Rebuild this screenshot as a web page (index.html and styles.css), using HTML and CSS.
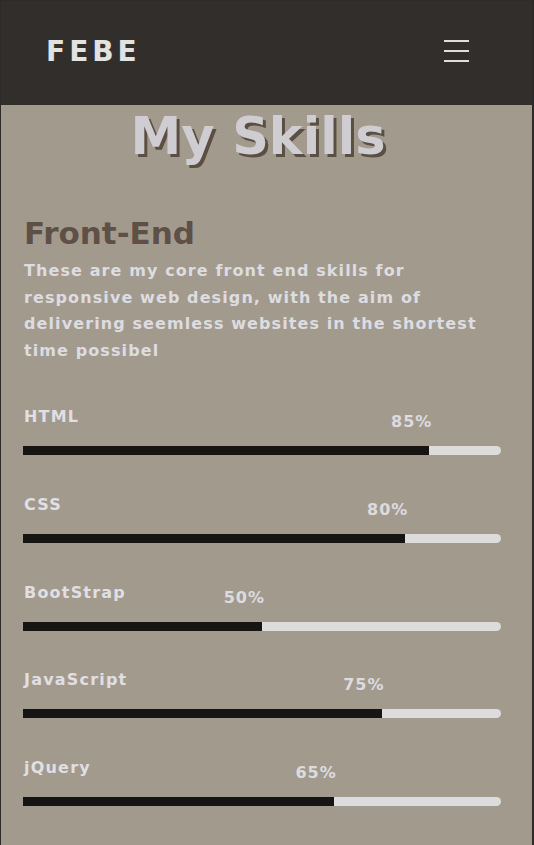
FILE: index.html
```html
<!DOCTYPE html>
<html lang="en">
<head>
<meta charset="utf-8">
<title>FEBE - My Skills</title>
<link rel="stylesheet" href="styles.css">
</head>
<body>
<div class="page">
  <header class="topbar">
    <div class="logo">FEBE</div>
    <button class="burger" aria-label="Menu"><span></span><span></span><span></span></button>
  </header>
  <main class="content">
    <h1 class="title">My Skills</h1>
    <h2 class="subtitle">Front-End</h2>
    <p class="intro">These are my core front end skills for responsive web design, with the aim of delivering seemless websites in the shortest time possibel</p>
    <div class="skills">
      <div class="skill">
        <div class="skill-name">HTML</div>
        <div class="skill-pct" style="width:85%">85%</div>
        <div class="track"><div class="fill" style="width:85%"></div></div>
      </div>
      <div class="skill">
        <div class="skill-name">CSS</div>
        <div class="skill-pct" style="width:80%">80%</div>
        <div class="track"><div class="fill" style="width:80%"></div></div>
      </div>
      <div class="skill">
        <div class="skill-name">BootStrap</div>
        <div class="skill-pct" style="width:50%">50%</div>
        <div class="track"><div class="fill" style="width:50%"></div></div>
      </div>
      <div class="skill">
        <div class="skill-name">JavaScript</div>
        <div class="skill-pct" style="width:75%">75%</div>
        <div class="track"><div class="fill" style="width:75%"></div></div>
      </div>
      <div class="skill">
        <div class="skill-name">jQuery</div>
        <div class="skill-pct" style="width:65%">65%</div>
        <div class="track"><div class="fill" style="width:65%"></div></div>
      </div>
    </div>
  </main>
</div>
</body>
</html>
```
FILE: styles.css
```css
* { box-sizing: border-box; }
html, body { margin: 0; padding: 0; }
body {
  background: #2b2a29;
  font-family: "DejaVu Sans", "Open Sans", sans-serif;
}
.page {
  min-height: 845px;
  border-top: 1px solid #2b2b2b;
  border-left: 1px solid #2b2b2b;
  border-right: 2px solid #2b2b2b;
  background: #a39a8e;
}
.topbar {
  height: 104px;
  background: #322e2b;
  display: flex;
  align-items: center;
  justify-content: space-between;
  padding: 0 63px 0 45px;
}
.logo {
  color: #e2e2e2;
  font-weight: 700;
  font-size: 28px;
  letter-spacing: 4px;
  margin-top: -4px;
}
.burger {
  width: 25px;
  height: 22px;
  padding: 0;
  border: 0;
  background: transparent;
  display: flex;
  flex-direction: column;
  justify-content: space-between;
  margin-top: -4px;
}
.burger span {
  display: block;
  height: 2px;
  background: #dedede;
}
.content {
  padding: 0 31px 40px 22px;
}
.title {
  margin: 0;
  padding-right: 8px;
  text-align: center;
  font-size: 51px;
  font-weight: 700;
  color: #cfcdd2;
  text-shadow: 3px 3px 0 #5b4e43;
  line-height: 64px;
}
.subtitle {
  margin: 44px 0 0 1px;
  font-size: 31px;
  font-weight: 700;
  color: #5e5046;
  line-height: 40px;
}
.intro {
  margin: 5px 0 0 1px;
  color: #dddce1;
  font-size: 16px;
  font-weight: 700;
  line-height: 26.5px;
  letter-spacing: 1.1px;
}
.skills {
  margin-top: 41px;
}
.skill {
  height: 87.75px;
  position: relative;
}
.skill-name {
  color: #e0dfe3;
  font-size: 16px;
  font-weight: 700;
  letter-spacing: 1.2px;
  line-height: 24px;
  padding-left: 1px;
}
.skill-pct {
  color: #dcdbe0;
  font-size: 16px;
  font-weight: 700;
  letter-spacing: 1px;
  text-align: right;
  line-height: 24px;
  margin-top: -19px;
  margin-left: 3px;
}
.track {
  margin-top: 12px;
  height: 9px;
  background: #dcdcdc;
  border-radius: 0 5px 5px 0;
  overflow: hidden;
}
.fill {
  height: 100%;
  background: #171514;
}
```
